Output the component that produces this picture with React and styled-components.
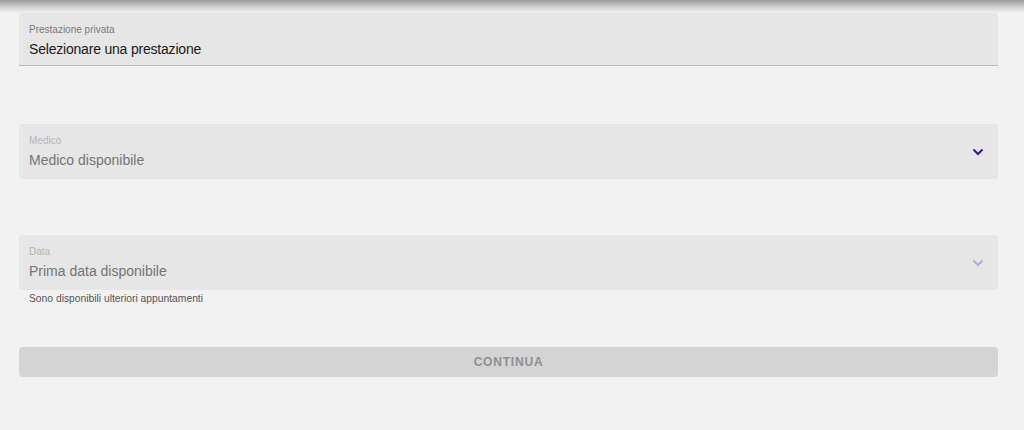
import React from 'react';
import styled, { createGlobalStyle } from 'styled-components';

const GlobalStyle = createGlobalStyle`
  body {
    margin: 0;
    background-color: #f2f2f2;
    font-family: "Liberation Sans", Arial, sans-serif;
  }
`;

const TopShade = styled.div`
  height: 13px;
  background: linear-gradient(to bottom, #9a9a9a 0%, #c8c8c8 45%, #f2f2f2 100%);
`;

const Form = styled.form`
  width: 979px;
  margin-left: 19px;
  display: flex;
  flex-direction: column;
  padding-bottom: 54px;
`;

const Field = styled.div`
  position: relative;
  height: ${(p) => (p.underline ? '52px' : '55px')};
  margin-top: ${(p) => p.top || 0}px;
  background-color: #e6e6e6;
  border-radius: ${(p) => (p.underline ? '4px 4px 0 0' : '4px')};
  border-bottom: ${(p) => (p.underline ? '1px solid #b8b8b8' : 'none')};
  padding: 0 10px;
  display: flex;
  flex-direction: column;
`;

const Label = styled.span`
  font-size: 10px;
  color: ${(p) => (p.dim ? '#b4b4b4' : '#7a7a7a')};
  margin-top: 11px;
  line-height: 12px;
`;

const Value = styled.span`
  font-size: 14px;
  color: ${(p) => (p.dim ? '#747474' : '#1a1a1a')};
  margin-top: 5px;
  line-height: 17px;
  letter-spacing: ${(p) => (p.dim ? '0' : '-0.2px')};
`;

const Chevron = styled.svg`
  position: absolute;
  right: 14px;
  top: 24px;
  width: 12px;
  height: 8px;
  color: ${(p) => (p.disabled ? '#b3acd6' : '#3b12a0')};
`;

const Helper = styled.div`
  font-size: 10.3px;
  color: #555;
  padding: 3px 10px 0;
  line-height: 12px;
`;

const Button = styled.button`
  margin-top: 42px;
  height: 30px;
  border: none;
  border-radius: 4px;
  background-color: #d4d4d4;
  color: #8f8f8f;
  font-family: "Liberation Sans", Arial, sans-serif;
  font-size: 12px;
  font-weight: bold;
  letter-spacing: 0.8px;
  cursor: default;
`;

const ChevronIcon = ({ disabled }) => (
  <Chevron disabled={disabled} viewBox="0 0 12 8">
    <path d="M1.5 1.5 L6 6 L10.5 1.5" fill="none" stroke="currentColor" strokeWidth="2" />
  </Chevron>
);

const App = () => (
  <>
    <GlobalStyle />
    <TopShade />
    <Form onSubmit={(e) => e.preventDefault()}>
      <Field underline>
        <Label>Prestazione privata</Label>
        <Value>Selezionare una prestazione</Value>
      </Field>

      <Field top={58}>
        <Label dim>Medico</Label>
        <Value dim>Medico disponibile</Value>
        <ChevronIcon />
      </Field>

      <Field top={56}>
        <Label dim>Data</Label>
        <Value dim>Prima data disponibile</Value>
        <ChevronIcon disabled />
      </Field>
      <Helper>Sono disponibili ulteriori appuntamenti</Helper>

      <Button type="submit" disabled>CONTINUA</Button>
    </Form>
  </>
);

export default App;
